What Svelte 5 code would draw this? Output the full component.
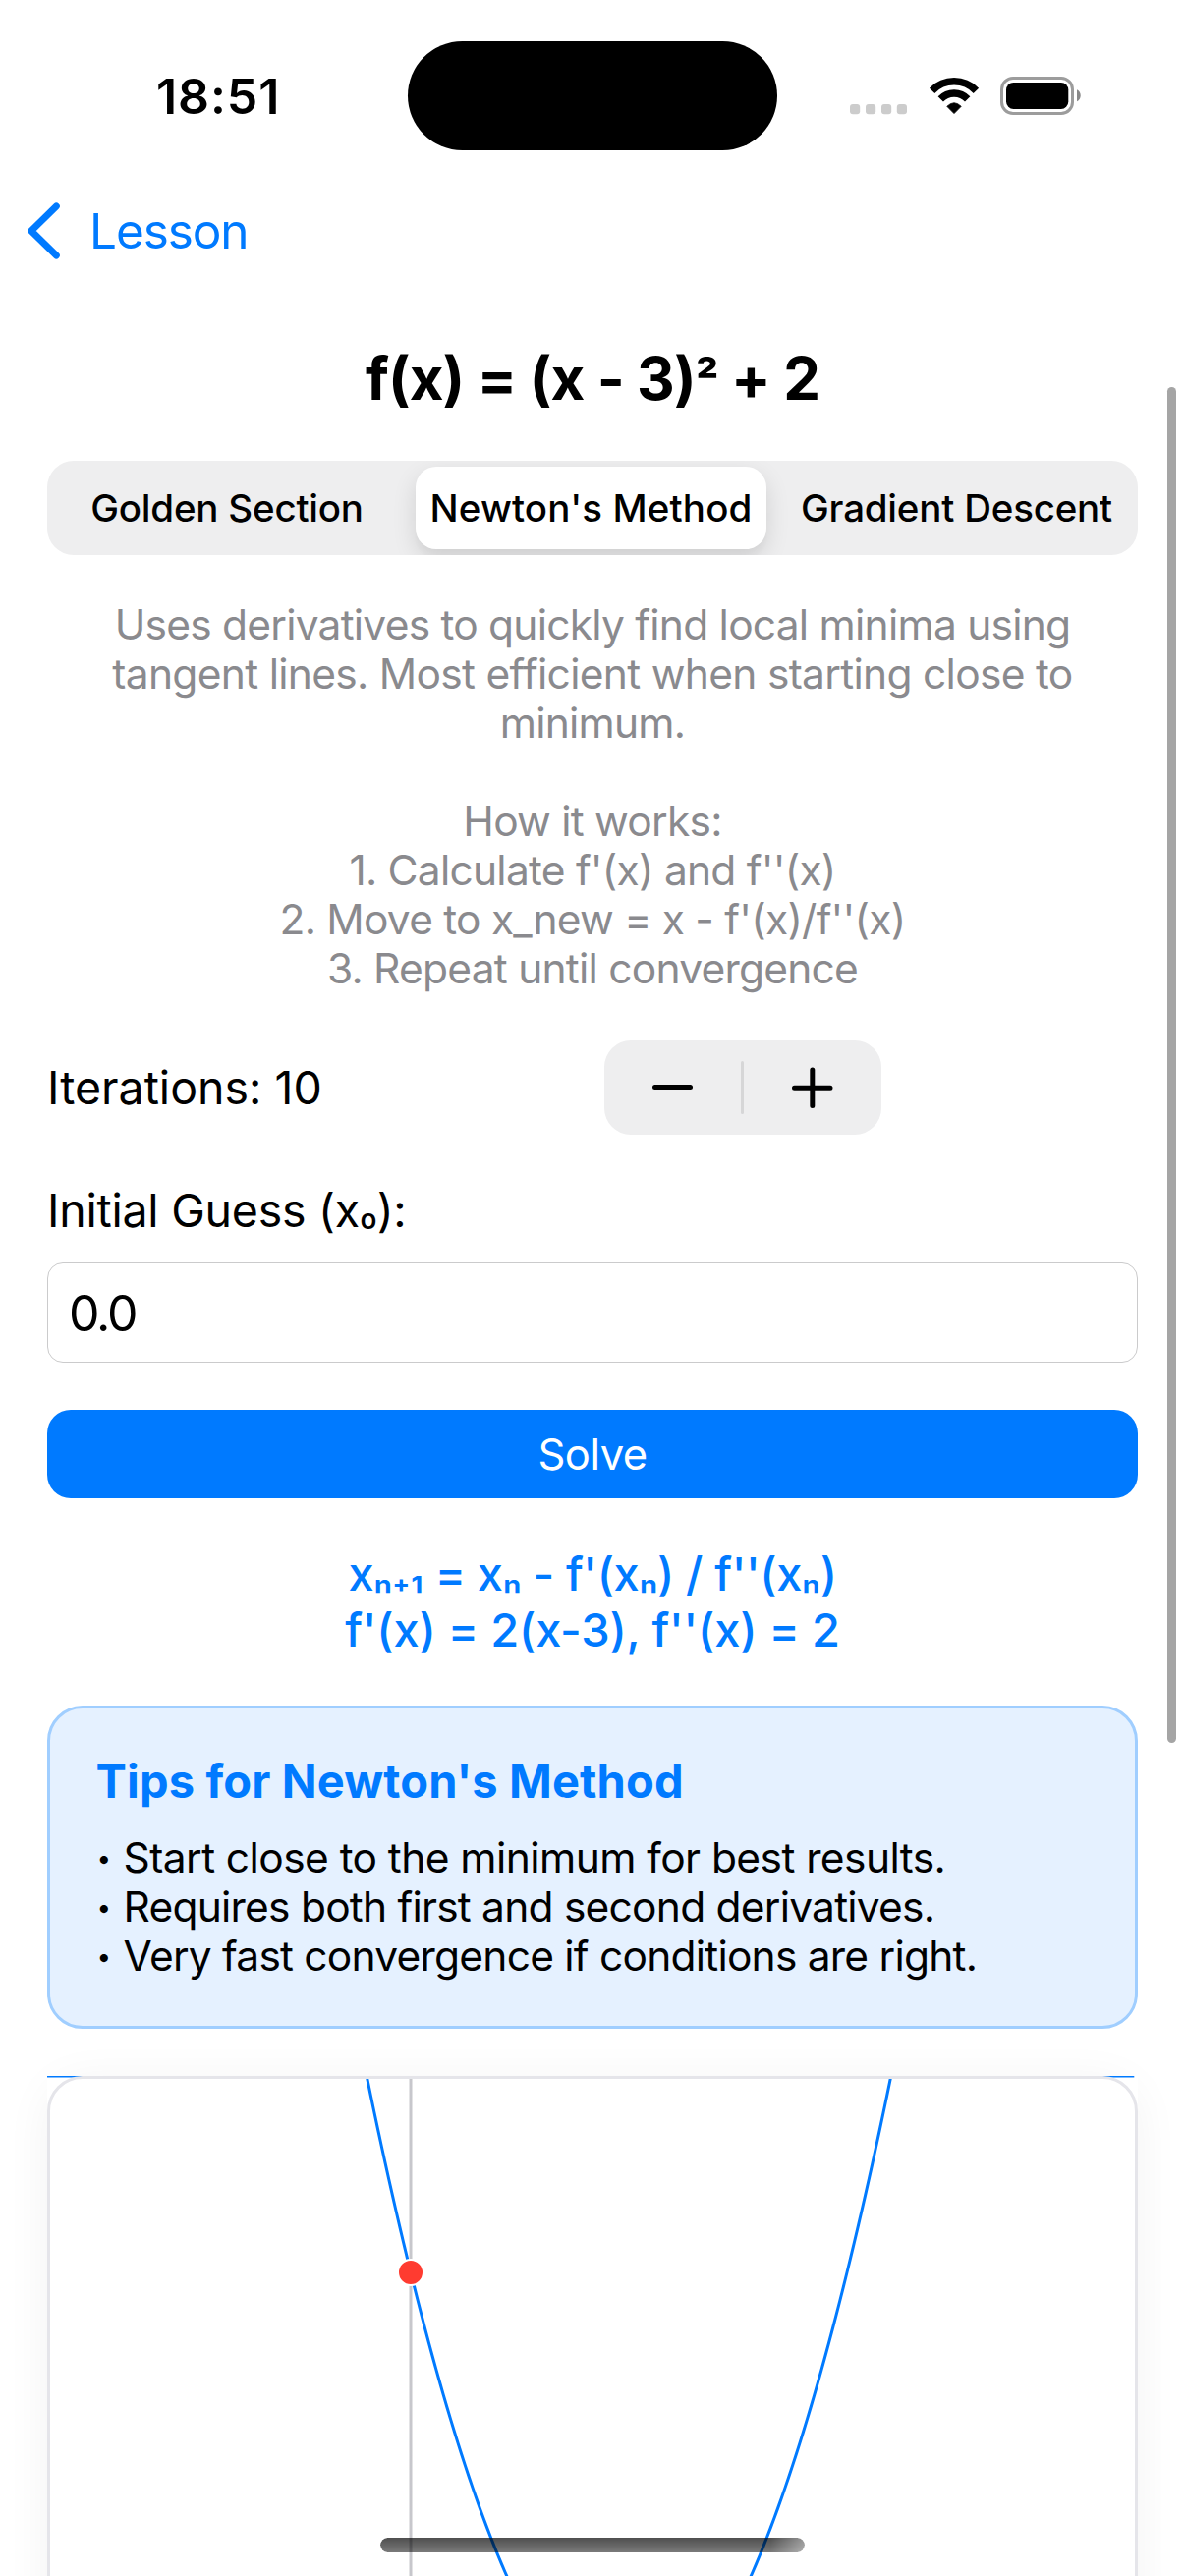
<script>
  const description = [
    'Uses derivatives to quickly find local minima using',
    'tangent lines. Most efficient when starting close to',
    'minimum.',
    '',
    'How it works:',
    "1. Calculate f'(x) and f''(x)",
    "2. Move to x_new = x - f'(x)/f''(x)",
    '3. Repeat until convergence'
  ];
  const tips = [
    'Start close to the minimum for best results.',
    'Requires both first and second derivatives.',
    'Very fast convergence if conditions are right.'
  ];
  const methods = ['Golden Section', "Newton's Method", 'Gradient Descent'];

  let selected = $state(1);
  let iterations = $state(10);
  let guess = $state('0.0');

  // Plot window: x from -5 to 10, y from -5 to 15, values clamped to the top edge
  const sx = (x) => (x + 5) * 74;
  const sy = (y) => (15 - y) * 50;
  const f = (x) => (x - 3) ** 2 + 2;
  const samples = Array.from({ length: 300 }, (_, i) => -5 + i * 0.05);
  const curve = samples
    .map((x, i) => `${i ? 'L' : 'M'}${sx(x).toFixed(2)} ${sy(Math.min(15, f(x))).toFixed(2)}`)
    .join('');
</script>

<div class="phone">
  <header class="status">
    <span class="time">18:51</span>
    <div class="indicators">
      <svg class="cell" width="58" height="39" viewBox="865 78 58 39" fill="#ccc">
        <rect x="865" y="106" width="10.2" height="10.2" rx="3" />
        <rect x="881" y="106" width="10.2" height="10.2" rx="3" />
        <rect x="897" y="106" width="10.2" height="10.2" rx="3" />
        <rect x="912.8" y="106" width="10.2" height="10.2" rx="3" />
      </svg>
      <svg class="wifi" width="52" height="39" viewBox="944.5 78 52 39" fill="none" stroke="#000">
        <path d="M948.1 92.3A31.2 31.2 0 0 1 992.9 92.3" stroke-width="7.6" />
        <path d="M956.8 100.9A18.9 18.9 0 0 1 984.2 100.9" stroke-width="7.4" />
        <path d="M963.3 108.3Q970.5 101.2 977.7 108.3L970.5 115.6Z" fill="#000" stroke-width="0.8" stroke-linejoin="round" />
      </svg>
      <svg class="battery" width="83" height="39" viewBox="1018 78 83 39">
        <rect x="1019.5" y="79.5" width="72" height="36" rx="11.5" fill="none" stroke="#9c9c9c" stroke-width="3" />
        <rect x="1024" y="84" width="63.3" height="27" rx="7.5" />
        <path d="M1096 91.3C1101 93.6 1101 101 1096 103.3Z" fill="#888" />
      </svg>
    </div>
    <div class="island"></div>
  </header>

  <nav class="nav">
    <svg width="34" height="58" viewBox="0 0 34 58" fill="none" stroke="#007aff" stroke-width="7" stroke-linecap="round" stroke-linejoin="round">
      <path d="M30.3 4L4.8 29L30.3 54" />
    </svg>
    <span>Lesson</span>
  </nav>

  <main>
    <h1>f(x) = (x - 3)<span class="sup">²</span> + 2</h1>

    <div class="segmented">
      {#each methods as method, i}
        <button class="segment" class:active={selected === i} onclick={() => (selected = i)}>{method}</button>
      {/each}
    </div>

    <div class="description">
      {#each description as line}
        <p>{line}</p>
      {/each}
    </div>

    <div class="iterations">
      <span>Iterations: {iterations}</span>
      <div class="stepper">
        <button aria-label="Decrement" onclick={() => iterations--}>
          <svg width="42" height="42" viewBox="0 0 42 42"><path d="M2.5 20.5H38.5" /></svg>
        </button>
        <i></i>
        <button aria-label="Increment" onclick={() => iterations++}>
          <svg width="42" height="42" viewBox="0 0 42 42"><path d="M2.5 21.2H39M20.8 3V39.4" /></svg>
        </button>
      </div>
    </div>

    <label for="guess">Initial Guess (x<span class="sub zero">₀</span>):</label>
    <input id="guess" bind:value={guess} />

    <button class="solve">Solve</button>

    <div class="formula">
      <p class="step">x<span class="sub">ₙ₊₁</span> = x<span class="sub">ₙ</span> - f'(x<span class="sub">ₙ</span>) / f''(x<span class="sub">ₙ</span>)</p>
      <p>f'(x) = 2(x-3), f''(x) = 2</p>
    </div>

    <section class="tips">
      <h2>Tips for Newton's Method</h2>
      <ul>
        {#each tips as tip}
          <li><span class="bullet">•</span>{tip}</li>
        {/each}
      </ul>
    </section>

    <section class="chart">
      <svg width="1110" height="1000" viewBox="0 0 1110 1000">
        <path d="M{sx(0)} 0V1000" stroke="#c7c7cc" stroke-width="3" />
        <path d={curve} fill="none" stroke="#007aff" stroke-width="3" />
        <circle cx={sx(0)} cy={sy(f(0))} r="13" fill="#ff3b30" stroke="#fff" stroke-width="2" />
      </svg>
      <div class="frame"></div>
    </section>
  </main>

  <div class="scrollbar"></div>
  <div class="home"></div>
</div>

<style>
  :global(body) { margin: 0; background: #fff; }

  .phone {
    position: relative;
    width: 1206px;
    height: 2622px;
    overflow: hidden;
    background: #fff;
    color: #000;
    font-family: Inter, 'Liberation Sans', sans-serif;
  }

  p, h1, h2, ul { margin: 0; padding: 0; }
  button { border: 0; padding: 0; background: none; font-family: inherit; color: inherit; }
  svg { display: block; }

  .status {
    display: flex;
    align-items: center;
    justify-content: space-between;
    height: 195px;
    padding: 0 105px 0 159px;
  }
  .time { font-size: 50px; font-weight: 600; line-height: 60px; letter-spacing: 0.9px; }
  .indicators { display: flex; }
  .cell { margin-right: 21.5px; }
  .wifi { margin-right: 21.5px; }
  .island {
    position: absolute;
    left: 415px;
    top: 41.5px;
    width: 376px;
    height: 111px;
    border-radius: 56px;
    background: #000;
  }

  .nav {
    display: flex;
    align-items: center;
    gap: 30px;
    height: 79px;
    padding-left: 27px;
    color: #007aff;
    font-size: 49.5px;
    letter-spacing: -1.1px;
  }

  main { display: flex; flex-direction: column; padding: 75px 48px 0; }

  h1 { height: 72px; font-size: 60px; font-weight: 700; line-height: 72px; letter-spacing: -0.9px; text-align: center; white-space: nowrap; }
  .sup { font-size: 52px; line-height: 0; }
  .sub { font-size: 43px; line-height: 0; vertical-align: 4px; }
  .zero { font-size: 39px; }

  .segmented {
    display: grid;
    grid-template-columns: 366px 375px 369px;
    height: 96px;
    margin-top: 48px;
    border-radius: 27px;
    background: #eeeeef;
    overflow: hidden;
  }
  .segment { font-size: 38.5px; font-weight: 450; letter-spacing: -0.21px; white-space: nowrap; }
  .segment.active {
    margin: 6px 9px;
    border-radius: 21px;
    background: #fff;
    box-shadow: 0 9px 24px rgba(0, 0, 0, 0.12), 0 9px 3px rgba(0, 0, 0, 0.02);
    font-weight: 550;
    letter-spacing: 0.13px;
  }

  .description {
    margin-top: 45.5px;
    color: #8a8a8e;
    font-size: 42.5px;
    letter-spacing: -0.77px;
    text-align: center;
  }
  .description p { height: 50px; line-height: 50px; white-space: nowrap; }
  .description p:nth-child(2) { letter-spacing: -0.7px; }

  .iterations {
    display: grid;
    grid-template-columns: 567px 282px;
    align-items: center;
    height: 96px;
    margin-top: 48.5px;
    font-size: 46.5px;
  }
  .stepper {
    display: grid;
    grid-template-columns: 139px 3px 140px;
    align-items: center;
    height: 96px;
    border-radius: 27px;
    background: #eeeeef;
  }
  .stepper button { display: flex; justify-content: center; }
  .stepper svg { fill: none; stroke: #000; stroke-width: 5; stroke-linecap: round; }
  .stepper i { height: 54px; border-radius: 2px; background: #d6d6d7; }

  label { height: 56px; margin-top: 49px; font-size: 46.5px; line-height: 56px; letter-spacing: -0.25px; }

  input {
    box-sizing: border-box;
    width: 1110px;
    height: 102px;
    margin: 25px 0 0;
    padding: 1px 21px 0;
    border: 1px solid #cbcbcc;
    border-radius: 16px;
    outline: 0;
    background: #fff;
    color: #000;
    font-family: inherit;
    font-size: 50px;
    letter-spacing: -2.2px;
  }

  .solve {
    height: 90px;
    margin-top: 48px;
    border-radius: 24px;
    background: #007aff;
    color: #fff;
    font-size: 43.5px;
    letter-spacing: -0.5px;
  }

  .formula {
    margin-top: 48.4px;
    color: #007aff;
    font-size: 47px;
    font-weight: 500;
    line-height: 57px;
    letter-spacing: -0.21px;
    text-align: center;
    white-space: nowrap;
  }
  .formula p { height: 57px; }
  .step { letter-spacing: -0.4px; }

  .tips {
    box-sizing: border-box;
    height: 329px;
    margin-top: 48.6px;
    padding: 45.4px 46.5px 0;
    border: 3px solid #a0ceff;
    border-radius: 36px;
    background: #e5f1ff;
  }
  h2 { color: #007aff; font-size: 47px; font-weight: 700; line-height: 57px; letter-spacing: 0.14px; }
  ul { margin-top: 24.8px; list-style: none; }
  li { display: flex; height: 50px; font-size: 42.5px; line-height: 50px; letter-spacing: -0.78px; white-space: nowrap; }
  li:first-child { letter-spacing: -0.57px; }
  .bullet { width: 28px; padding-left: 1px; box-sizing: border-box; font-size: 26px; line-height: 52px; }

  .chart {
    position: relative;
    height: 1000px;
    margin-top: 48px;
  }
  .chart::before {
    content: '';
    position: absolute;
    inset: 0;
    border-radius: 36px;
    box-shadow: 0 6px 48px rgba(0, 0, 0, 0.05);
  }
  .chart svg { position: relative; background: #fff; overflow: hidden; }
  .frame { position: absolute; inset: 0; border: 3px solid #e5e5ea; border-radius: 36px; }

  .scrollbar {
    position: absolute;
    top: 394px;
    right: 9px;
    width: 9px;
    height: 1380px;
    border-radius: 5px;
    background: #a5a5a5;
  }
  .home {
    position: absolute;
    left: 387px;
    top: 2583px;
    width: 432px;
    height: 15px;
    border-radius: 8px;
    background: linear-gradient(to bottom, rgba(0, 0, 0, 0.69), rgba(0, 0, 0, 0.52));
    -webkit-mask-image: linear-gradient(to right, #000 92%, rgba(0, 0, 0, 0.6));
    mask-image: linear-gradient(to right, #000 92%, rgba(0, 0, 0, 0.6));
  }
</style>
